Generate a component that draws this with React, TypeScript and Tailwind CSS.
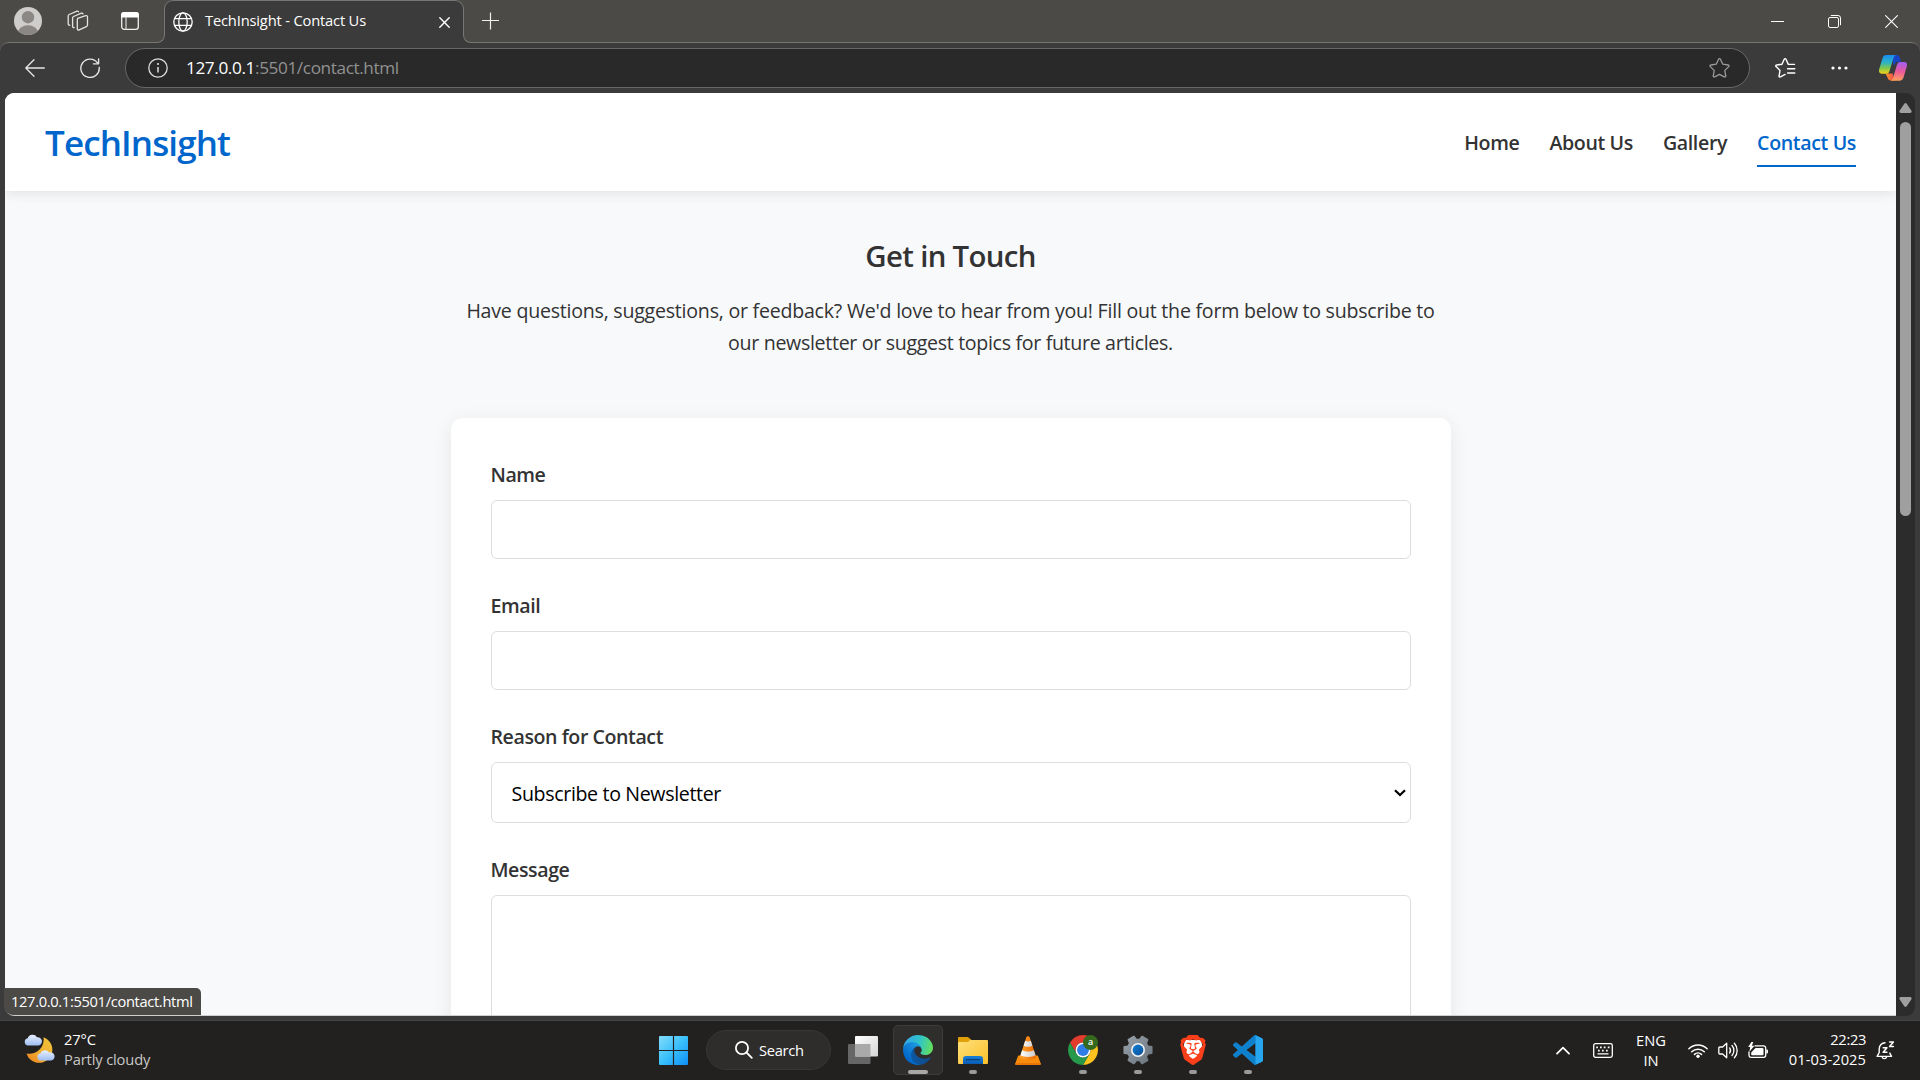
import React from "react";
import { SiBrave } from "react-icons/si";

/* ---------- Browser chrome icons ---------- */

const AvatarIcon = () => (
  <svg width="28" height="28" viewBox="0 0 28 28">
    <defs>
      <clipPath id="avatar-clip">
        <circle cx="14" cy="14" r="14" />
      </clipPath>
    </defs>
    <circle cx="14" cy="14" r="14" fill="#cfcdcb" />
    <g clipPath="url(#avatar-clip)" fill="#8b8784">
      <circle cx="14" cy="10.2" r="6.2" />
      <ellipse cx="14" cy="25.5" rx="10" ry="7.2" />
    </g>
  </svg>
);

const WorkspacesIcon = () => (
  <svg width="22" height="22" viewBox="0 0 22 22" fill="none" stroke="#e4e3e2" strokeWidth="1.3" strokeLinecap="round" strokeLinejoin="round">
    <path d="M10.6 8.3 18.7 5.7a1.3 1.3 0 0 1 1.8 1.2v8.2a1.6 1.6 0 0 1-1.1 1.5l-7.2 3.3a1.3 1.3 0 0 1-1.9-1.2V9.8a1.6 1.6 0 0 1 .9-1.6Z" />
    <path d="M7.2 17.6a1.3 1.3 0 0 1-1.6-1.2V8a1.6 1.6 0 0 1 1-1.5l7.8-3.3a1.3 1.3 0 0 1 1.6.8" />
    <path d="M2.8 15.2a1.3 1.3 0 0 1-1.6-1.2V6a1.6 1.6 0 0 1 1-1.5L10 1.1a1.3 1.3 0 0 1 1.5.7" />
  </svg>
);

const TabActionsIcon = () => (
  <svg width="18" height="18" viewBox="0 0 18 18" fill="none">
    <rect x=".7" y=".7" width="16.6" height="16.6" rx="2.6" stroke="#f0f0f0" strokeWidth="1.3" />
    <path d="M0 5.6V3a3 3 0 0 1 3-3h12a3 3 0 0 1 3 3v2.6z" fill="#fff" />
    <path d="M5 5v12.5" stroke="#d8d8d8" strokeWidth="1.2" />
  </svg>
);

const GlobeIcon = () => (
  <svg width="20" height="20" viewBox="0 0 20 20" fill="none" stroke="#fff" strokeWidth="1.3">
    <circle cx="10" cy="10" r="9.2" />
    <ellipse cx="10" cy="10" rx="4.2" ry="9.2" />
    <path d="M1.6 6.7h16.8M1.6 13.3h16.8" />
  </svg>
);

const TabCloseIcon = () => (
  <svg width="11" height="11" viewBox="0 0 11 11" stroke="#fff" strokeWidth="1.4" strokeLinecap="round">
    <path d="m.8.8 9.4 9.4M10.2.8.8 10.2" />
  </svg>
);

const PlusIcon = () => (
  <svg width="18" height="18" viewBox="0 0 18 18" stroke="#f0f0f0" strokeWidth="1.2">
    <path d="M8.500 .5v17M0 8.500h17" />
  </svg>
);

const MinimiseIcon = () => (
  <svg width="13" height="13" viewBox="0 0 13 13">
    <path d="M0 6.5h13" stroke="#fff" strokeWidth="1" />
  </svg>
);

const RestoreIcon = () => (
  <svg width="13" height="13" viewBox="0 0 13 13" fill="none" stroke="#fff" strokeWidth="1">
    <rect x=".5" y="2.5" width="10" height="10" rx="1.6" />
    <path d="M2.8.5h7.2a2.5 2.5 0 0 1 2.5 2.5v7.2" />
  </svg>
);

const WindowCloseIcon = () => (
  <svg width="13" height="13" viewBox="0 0 13 13" stroke="#fff" strokeWidth="1.1">
    <path d="m.3.3 12.4 12.4M12.7.3.3 12.7" />
  </svg>
);

const BackIcon = () => (
  <svg width="20" height="18" viewBox="0 0 20 18" fill="none" stroke="#e6e6e6" strokeWidth="1.3" strokeLinecap="round" strokeLinejoin="round">
    <path d="M19.3 9H.9M9 .8.8 9 9 17.2" />
  </svg>
);

const RefreshIcon = () => (
  <svg width="20" height="20" viewBox="0 0 20 20" fill="none" stroke="#e6e6e6" strokeWidth="1.35" strokeLinecap="round" strokeLinejoin="round">
    <path d="M19.2 9.3A9.2 9.2 0 1 1 17.6 5" />
    <path d="M18.6.8v5h-5.2" />
  </svg>
);

const InfoIcon = () => (
  <svg width="20" height="20" viewBox="0 0 20 20" fill="none" stroke="#dcdcdc">
    <circle cx="10" cy="10" r="9.2" strokeWidth="1.3" />
    <path d="M10 9v5.6" strokeWidth="1.5" />
    <circle cx="10" cy="6" r="1.05" fill="#dcdcdc" stroke="none" />
  </svg>
);

const StarIcon = () => (
  <svg width="21" height="20" viewBox="0 0 21 20" fill="none" stroke="#9a9a9a" strokeWidth="1.3" strokeLinejoin="round">
    <path d="M9.6 1.2a1 1 0 0 1 1.8 0l2.4 5 5.4.8a.9.9 0 0 1 .5 1.6l-3.9 3.8.9 5.4a.9.9 0 0 1-1.4 1l-4.8-2.5-4.8 2.5a.9.9 0 0 1-1.4-1l.9-5.4L1.3 8.6A.9.9 0 0 1 1.800 7l5.400-.8Z" />
  </svg>
);

const FavoritesIcon = () => (
  <svg width="21" height="20" viewBox="0 0 21 20" fill="none" stroke="#fff" strokeWidth="1.4" strokeLinejoin="round" strokeLinecap="round">
    <path d="M19.500 6.400H13.300L11 1.300a1 1 0 0 0-1.800 0L7 6.200l-5.400.8a.9.9 0 0 0-.5 1.600l3.900 3.800-.9 5.400a.9.9 0 0 0 1.400 1l4.600-2.400" />
    <path d="M12.600 10.700h7.200M12.600 15h7.200" />
  </svg>
);

const MoreIcon = () => (
  <svg width="17" height="4" viewBox="0 0 17 4" fill="#fff">
    <circle cx="2" cy="2" r="1.6" />
    <circle cx="8.500" cy="2" r="1.6" />
    <circle cx="15" cy="2" r="1.6" />
  </svg>
);

const CopilotIcon = () => (
  <svg width="28" height="26" viewBox="0 0 28 26">
    <defs>
      <linearGradient id="cp-left" x1="0" y1="0" x2="0" y2="1">
        <stop offset="0" stopColor="#1a8cf0" />
        <stop offset=".4" stopColor="#2bb3c6" />
        <stop offset=".7" stopColor="#7fc94a" />
        <stop offset="1" stopColor="#f6d31b" />
      </linearGradient>
      <linearGradient id="cp-right" x1=".4" y1="0" x2=".3" y2="1">
        <stop offset="0" stopColor="#a45df0" />
        <stop offset=".5" stopColor="#ee5a97" />
        <stop offset="1" stopColor="#fda45c" />
      </linearGradient>
      <linearGradient id="cp-bottom" x1="0" y1="0" x2="1" y2="0">
        <stop offset="0" stopColor="#f99b2c" />
        <stop offset="1" stopColor="#f0464a" />
      </linearGradient>
    </defs>
    <path d="M14 0h3.500c2.200 0 3 1.500 3.600 3.400l1 3.400h-3.200c-1.800 0-2.700 1-3.200 2.700L14 10z" fill="#1646c6" />
    <path d="M6.500 18.500h7.300l1.700 7H12c-2 0-3-1.300-3.600-3.300z" fill="url(#cp-bottom)" />
    <path d="M7.600 0h9.600c-1.500.3-2.300 1.500-2.800 3.200l-4 13c-.5 1.700-1.500 2.500-3.200 2.500H3c-2.600 0-3.500-2-2.800-4.400L3.500 3.200C4.100 1.200 5.400 0 7.600 0z" fill="url(#cp-left)" />
    <path d="M20.400 25.800h-9c1.500-.3 2.200-1.500 2.700-3.200l3.900-12.800c.5-1.700 1.500-2.800 3.200-2.800h4c2.600 0 3.300 2 2.600 4.400l-3.300 11.200c-.6 2-1.900 3.200-4.100 3.200z" fill="url(#cp-right)" />
  </svg>
);

/* ---------- Taskbar icons ---------- */

const WeatherIcon = () => (
  <svg width="31" height="29" viewBox="0 0 31 29">
    <defs>
      <linearGradient id="moon" x1="1" y1="0" x2="0" y2="1">
        <stop offset="0" stopColor="#f5c63a" />
        <stop offset=".6" stopColor="#f0ab30" />
        <stop offset="1" stopColor="#ee7e1c" />
      </linearGradient>
      <linearGradient id="cloud" x1="0" y1="0" x2="0" y2="1">
        <stop offset="0" stopColor="#e8f0fd" />
        <stop offset="1" stopColor="#9fbdf2" />
      </linearGradient>
    </defs>
    <path d="M19.500 3.200a13.200 13.200 0 1 1-17 16.300c9.500 1.800 18.500-6 17-16.300z" fill="url(#moon)" />
    <path d="M4 11.500a3.700 3.700 0 0 1-.3-7.300A5.200 5.200 0 0 1 13 3.200a4.200 4.200 0 0 1 1.500 8.300z" fill="url(#cloud)" />
    <path d="M16.500 26.500a3.500 3.500 0 0 1-.2-6.900 5 5 0 0 1 8.900-1.200 4.100 4.100 0 0 1 2.300 8.100z" fill="url(#cloud)" />
  </svg>
);

const WindowsIcon = () => (
  <svg width="29" height="29" viewBox="0 0 29 29">
    <defs>
      <linearGradient id="win" x1="0" y1="0" x2="29" y2="29" gradientUnits="userSpaceOnUse">
        <stop offset="0" stopColor="#83dcfb" />
        <stop offset=".5" stopColor="#3bc0fb" />
        <stop offset="1" stopColor="#0b8ef5" />
      </linearGradient>
    </defs>
    <path d="M1 0h12.900v13.900H0V1a1 1 0 0 1 1-1zM15.100 0H28a1 1 0 0 1 1 1v12.900H15.100zM0 15.100h13.900V29H1a1 1 0 0 1-1-1zM15.100 15.100H29V28a1 1 0 0 1-1 1H15.100z" fill="url(#win)" />
  </svg>
);

const SearchIcon = () => (
  <svg width="18" height="18" viewBox="0 0 18 18" fill="none" stroke="#fff" strokeWidth="1.8" strokeLinecap="round">
    <circle cx="7" cy="7" r="6.100" />
    <path d="m11.500 11.500 5.300 5.300" />
  </svg>
);

const TaskViewIcon = () => (
  <svg width="30" height="28" viewBox="0 0 30 28">
    <defs>
      <linearGradient id="tv" x1="0" y1="0" x2="1" y2="1">
        <stop offset="0" stopColor="#fff" />
        <stop offset="1" stopColor="#d4d4d4" />
      </linearGradient>
    </defs>
    <rect x="0" y="8" width="22.500" height="20" rx="1" fill="#666" />
    <rect x="7" y="0" width="23" height="20.500" rx="1" fill="url(#tv)" />
    <path d="M7 8h15.500v12.500H8a1 1 0 0 1-1-1z" fill="#a9a9a9" />
  </svg>
);

const EdgeIcon = () => (
  <svg width="30" height="30" viewBox="0 0 256 256">
    <defs>
      <linearGradient id="edge-a" x1="58" y1="177" x2="237" y2="177" gradientUnits="userSpaceOnUse">
        <stop offset="0" stopColor="#0c59a4" />
        <stop offset="1" stopColor="#114a8b" />
      </linearGradient>
      <linearGradient id="edge-b" x1="150" y1="100" x2="46" y2="212" gradientUnits="userSpaceOnUse">
        <stop offset="0" stopColor="#1b9de2" />
        <stop offset=".4" stopColor="#1383d9" />
        <stop offset="1" stopColor="#0067c9" />
      </linearGradient>
      <linearGradient id="edge-c" x1="20" y1="60" x2="250" y2="120" gradientUnits="userSpaceOnUse">
        <stop offset="0" stopColor="#35a9e8" />
        <stop offset=".5" stopColor="#2fc4c8" />
        <stop offset="1" stopColor="#66e05a" />
      </linearGradient>
    </defs>
    <path fill="url(#edge-a)" d="M231 190.500c-3.400 1.800-6.900 3.400-10.500 4.700a101.500 101.500 0 0 1-35.900 6.400c-47.300 0-88.500-32.500-88.500-74.300A31.500 31.500 0 0 1 112.400 100c-42.800 1.800-53.800 46.400-53.800 72.500 0 74 68.100 81.400 82.800 81.400 7.900 0 19.800-2.300 27-4.600l1.300-.4a128.300 128.300 0 0 0 66.600-52.800 4 4 0 0 0-5.300-5.600z" />
    <path fill="url(#edge-b)" d="M105.700 241.400a79.200 79.200 0 0 1-22.700-21.300 80.700 80.700 0 0 1 29.500-120c3.100-1.500 8.500-4.100 15.600-4a32.400 32.400 0 0 1 25.700 13 31.900 31.900 0 0 1 6.300 18.700c0-.2 24.500-79.600-80-79.600-43.900 0-80 41.600-80 78.200a130.200 130.200 0 0 0 12.100 56 128 128 0 0 0 156.400 67 75.500 75.500 0 0 1-62.800-8z" />
    <path fill="url(#edge-c)" d="M152.300 148.900c-.9 1-3.400 2.500-3.400 5.600 0 2.600 1.700 5.200 4.800 7.300 14.300 10 41.400 8.600 41.500 8.600a59.600 59.600 0 0 0 30.300-8.300 61.400 61.400 0 0 0 30.400-52.900c.3-22.400-8-37.300-11.300-43.900C223.500 23.900 177.700 0 128 0A128 128 0 0 0 0 126.200c.5-36.500 36.800-66 80-66 3.500 0 23.500.3 42 10.100 16.300 8.600 24.900 19 30.800 29.300 6.200 10.700 7.300 24.100 7.300 29.500s-2.700 13.300-7.800 19.900z" />
  </svg>
);

const FolderIcon = () => (
  <svg width="30" height="27" viewBox="0 0 30 27">
    <defs>
      <linearGradient id="folder" x1="0" y1="0" x2="1" y2="1">
        <stop offset="0" stopColor="#ffe07a" />
        <stop offset="1" stopColor="#fbc02a" />
      </linearGradient>
      <linearGradient id="folder-blue" x1="0" y1="0" x2="0" y2="1">
        <stop offset="0" stopColor="#1a80d8" />
        <stop offset="1" stopColor="#0a5cb0" />
      </linearGradient>
    </defs>
    <path d="M1 0h8.200c.7 0 1.200.2 1.700.7L13.500 3 9 7H0V1a1 1 0 0 1 1-1z" fill="#e0a009" />
    <path d="M0 6.200c0-.7.400-1.100 1-1.100h7.500c.8 0 1.300-.2 1.900-.7l1.200-.9c.5-.4 1-.5 1.700-.5H29a1 1 0 0 1 1 1v22a1 1 0 0 1-1 1H1a1 1 0 0 1-1-1z" fill="url(#folder)" />
    <path d="M5 27v-5a3 3 0 0 1 3-3h14a3 3 0 0 1 3 3v5z" fill="url(#folder-blue)" />
    <path d="M8.500 22.700h13" stroke="#08427f" strokeWidth="1.200" strokeLinecap="round" />
  </svg>
);

const VlcIcon = () => (
  <svg width="26" height="29" viewBox="0 0 26 29">
    <defs>
      <linearGradient id="vlc" x1="0" y1="0" x2="1" y2="0">
        <stop offset="0" stopColor="#ffa42e" />
        <stop offset="1" stopColor="#ef6a00" />
      </linearGradient>
      <linearGradient id="vlc-white" x1="0" y1="0" x2="1" y2="0">
        <stop offset="0" stopColor="#fff" />
        <stop offset="1" stopColor="#c9c9c9" />
      </linearGradient>
    </defs>
    <path d="M4.200 19.500h17.600c.8 0 1.200.3 1.400 1l2.600 7.200c.2.700-.2 1.100-.9 1.100H1.100c-.7 0-1.100-.4-.9-1.100l2.600-7.200c.2-.7.600-1 1.400-1z" fill="#f98b0e" />
    <path d="M.2 27h25.600v1a1 1 0 0 1-1 1H1.200a1 1 0 0 1-1-1z" fill="#e87500" />
    <path d="M11.500.8c.3-.9 2.700-.9 3 0L21 20.600c.3 2.200-3.700 3.200-8 3.200s-8.300-1-8-3.200z" fill="url(#vlc)" />
    <path d="M10.200 4.800c1.500.8 4.100.8 5.600 0l1.600 4.900c-2.300 1.300-6.500 1.300-8.800 0zM7.100 14.300c3 1.700 8.800 1.700 11.800 0l1.600 5c-3.500 2.300-11.500 2.300-15 0z" fill="url(#vlc-white)" />
  </svg>
);

const ChromeIcon = () => (
  <svg width="30" height="30" viewBox="0 0 48 48">
    <path d="M24 12h20.780A24 24 0 0 0 3.220 12l10.390 18.010A12 12 0 0 1 24 12z" fill="#e33b2e" />
    <path d="M34.390 30.010 24 48a24 24 0 0 0 20.780-36H24a12 12 0 0 1 10.390 18.010z" fill="#fcc31e" />
    <path d="M13.610 30.010 3.220 12A24 24 0 0 0 24 48l10.390-17.990a12 12 0 0 1-20.780 0z" fill="#27994a" />
    <circle cx="24" cy="24" r="12" fill="#fff" />
    <circle cx="24" cy="24" r="9.500" fill="#2f7de9" />
  </svg>
);

const polar = (r: number, deg: number) => {
  const a = (deg * Math.PI) / 180;
  return `${(15 + r * Math.cos(a)).toFixed(2)} ${(15 + r * Math.sin(a)).toFixed(2)}`;
};
const gearPath =
  "M" +
  [0, 60, 120, 180, 240, 300]
    .flatMap((d) => [polar(10.6, d - 20), polar(14, d - 13), polar(14, d + 13), polar(10.6, d + 20)])
    .join("L") +
  "Z";

const SettingsIcon = () => (
  <svg width="30" height="30" viewBox="0 0 30 30">
    <defs>
      <linearGradient id="gear" x1="0" y1="0" x2="1" y2="1">
        <stop offset="0" stopColor="#98a1a9" />
        <stop offset="1" stopColor="#6a747d" />
      </linearGradient>
      <linearGradient id="gear-blue" x1="0" y1="0" x2="1" y2="1">
        <stop offset="0" stopColor="#0f7fd4" />
        <stop offset="1" stopColor="#0a4f96" />
      </linearGradient>
    </defs>
    <path d={gearPath} fill="url(#gear)" stroke="url(#gear)" strokeWidth="1.800" strokeLinejoin="round" />
    <circle cx="15" cy="15" r="7" fill="#f2f2f2" />
    <circle cx="15" cy="15" r="5.400" fill="url(#gear-blue)" />
  </svg>
);

const BraveIcon = () => (
  <div className="relative flex size-[30px] items-center justify-center">
    <svg className="absolute" width="30" height="30" viewBox="0 0 30 30">
      <path d="M7 5h16l2 9-4 9-6 4-6-4-4-9z" fill="#fff" />
    </svg>
    <SiBrave className="relative" size={30} color="#fb3f1a" />
  </div>
);

const VsCodeIcon = () => (
  <svg width="30" height="30" viewBox="0 0 100 100">
    <path
      fillRule="evenodd"
      fill="#0f80cc"
      d="M70.900 99.300a6.200 6.200 0 0 0 5-.2l20.600-9.900A6.250 6.250 0 0 0 100 83.600V16.400a6.250 6.250 0 0 0-3.500-5.600L75.900.9a6.200 6.200 0 0 0-7.100 1.200L29.400 38 12.200 25a4.200 4.200 0 0 0-5.300.2L1.400 30.300a4.200 4.200 0 0 0 0 6.200L16.200 50 1.400 63.500a4.200 4.200 0 0 0 0 6.200l5.500 5a4.200 4.200 0 0 0 5.300.2l17.200-13 39.400 35.900c.6.600 1.300 1.100 2.100 1.500zM75 27.300 45.100 50 75 72.700z"
    />
    <path fill="#27a5ee" d="M75 1v98c.3 0 .6-.1.900-.3l20.600-9.500A6.250 6.250 0 0 0 100 83.600V16.400a6.250 6.250 0 0 0-3.500-5.600L75.900 1z" />
  </svg>
);

const ChevronUpIcon = () => (
  <svg width="14" height="9" viewBox="0 0 14 9" fill="none" stroke="#fff" strokeWidth="1.700" strokeLinecap="round" strokeLinejoin="round">
    <path d="m1 7.700 6-6 6 6" />
  </svg>
);

const KeyboardIcon = () => (
  <svg width="20" height="15" viewBox="0 0 20 15" fill="none">
    <rect x=".7" y=".7" width="18.600" height="13.600" rx="1.800" stroke="#fff" strokeWidth="1.300" />
    <g fill="#fff">
      <path d="M3.200 3.600h1.700v1.600H3.200zM7 3.600h1.700v1.600H7zM10.800 3.600h1.700v1.600h-1.700zM14.800 3.600h1.700v1.600h-1.700zM5 6.800h1.700v1.600H5zM9 6.800h1.700v1.600H9zM13 6.800h1.700v1.600H13zM4.500 10.200h11v1.400h-11z" />
    </g>
  </svg>
);

const WifiIcon = () => (
  <svg width="20" height="15" viewBox="0 0 20 15" fill="none" stroke="#fff" strokeWidth="1.500" strokeLinecap="round">
    <path d="M.9 5.800a12.900 12.900 0 0 1 18.200 0M3.700 8.700a9 9 0 0 1 12.600 0M6.500 11.400a5 5 0 0 1 7 0" />
    <circle cx="10" cy="13.200" r="1.700" fill="#fff" stroke="none" />
  </svg>
);

const SpeakerIcon = () => (
  <svg width="20" height="17" viewBox="0 0 20 17" fill="none" stroke="#fff" strokeWidth="1.300" strokeLinecap="round" strokeLinejoin="round">
    <path d="M8.700 1.200v14.600L4.600 12H1.800a1 1 0 0 1-1-1V6a1 1 0 0 1 1-1h2.800z" />
    <path d="M11.600 5.900a4.300 4.300 0 0 1 0 5.200M14 3.500a7.500 7.500 0 0 1 0 10M16.400 1.200a11 11 0 0 1 0 14.600" />
  </svg>
);

const BatteryIcon = () => (
  <svg width="20" height="17" viewBox="0 0 20 17">
    <path d="M7 3.900h8.700a2 2 0 0 1 2 2v7.400a2 2 0 0 1-2 2H3a2 2 0 0 1-2-2V10" fill="none" stroke="#fff" strokeWidth="1.300" strokeLinecap="round" />
    <path d="M7.500 6h7a1 1 0 0 1 1 1v5.200a1 1 0 0 1-1 1H4.200a1 1 0 0 1-1-1V10.500z" fill="#fff" />
    <path d="M18.300 7.600h.7a1 1 0 0 1 1 1v2a1 1 0 0 1-1 1h-.7z" fill="#fff" />
    <path d="M3.400 0 .2 5h2L1.400 9.800 6.400 3.700H3.900L5.300 0z" fill="#fff" />
  </svg>
);

const BellIcon = () => (
  <svg width="19" height="19" viewBox="0 0 19 19" fill="none" stroke="#fff" strokeLinecap="round" strokeLinejoin="round">
    <path d="M9 1.700a6.200 6.200 0 0 0-5.800 6v3.800L1.100 15.400h14.400l-1.700-3.300" strokeWidth="1.400" />
    <path d="M6.100 15.800a2.300 2.300 0 0 0 4.500 0" strokeWidth="1.400" />
    <path d="M7.200 6.700h3.700l-3.700 4.600h3.700M13.600 1h3.800l-3.800 4.600h3.800" strokeWidth="1.500" />
  </svg>
);

/* ---------- Browser window ---------- */

function TitleBar() {
  return (
    <div className="flex h-[42px] shrink-0 bg-[#4c4a47]">
      <div className="flex w-[164px] items-center pl-[14px] pb-px">
        <AvatarIcon />
        <div className="ml-[25px]">
          <WorkspacesIcon />
        </div>
        <div className="ml-[32px]">
          <TabActionsIcon />
        </div>
      </div>
      <div className="relative z-10 flex h-[44px] w-[300px] items-center rounded-t-[9px] border border-b-0 border-[#777674] bg-[#3b3b3b] pb-px pl-[8px]">
        <GlobeIcon />
        <span className="ml-[12px] pb-[3px] text-[14.7px] tracking-[-0.17px] whitespace-nowrap text-white">TechInsight - Contact Us</span>
        <div className="mr-[13px] ml-auto">
          <TabCloseIcon />
        </div>
        <div className="absolute bottom-0 -left-[8px] h-[10px] w-[8px] bg-[#3b3b3b]">
          <div className="h-[9px] w-[8px] rounded-br-[8px] border-r border-b border-[#777674] bg-[#4c4a47]" />
        </div>
        <div className="absolute -right-[8px] bottom-0 h-[10px] w-[8px] bg-[#3b3b3b]">
          <div className="h-[9px] w-[8px] rounded-bl-[8px] border-b border-l border-[#777674] bg-[#4c4a47]" />
        </div>
      </div>
      <div className="flex flex-1 items-center pl-[18px]">
        <PlusIcon />
        <div className="ml-auto flex items-center gap-[44px] pr-[22px]">
          <MinimiseIcon />
          <RestoreIcon />
          <WindowCloseIcon />
        </div>
      </div>
    </div>
  );
}

function Toolbar() {
  return (
    <div className="h-[51px] shrink-0 bg-[#4c4a47]">
      <div className="flex h-full items-center rounded-t-[9px] border-t border-[#777674] bg-[#3b3b3b] pl-[25px]">
        <BackIcon />
        <div className="ml-[35px]">
          <RefreshIcon />
        </div>
        <div className="ml-[25px] flex h-[40px] w-[1625px] items-center rounded-full border border-[#686868] bg-[#292929] pr-[19px] pl-[22px]">
          <InfoIcon />
          <span className="ml-[18px] pb-px text-[17.2px] tracking-[-0.39px] text-[#919191]">
            <span className="text-white">127.0.0.1</span>:5501/contact.html
          </span>
          <div className="ml-auto">
            <StarIcon />
          </div>
        </div>
        <div className="ml-[25px]">
          <FavoritesIcon />
        </div>
        <div className="ml-[35px]">
          <MoreIcon />
        </div>
        <div className="ml-[31px]">
          <CopilotIcon />
        </div>
      </div>
    </div>
  );
}

function Scrollbar() {
  return (
    <div className="flex w-[19px] flex-col items-center rounded-r-[9px] bg-[#2c2c2c] pt-[10px] pr-px pb-[9px]">
      <svg width="13" height="10" viewBox="0 0 13 10" fill="#9f9f9f">
        <path d="M5.300.8a1.500 1.500 0 0 1 2.400 0l4.600 6.800A1.500 1.500 0 0 1 11 10H2A1.500 1.500 0 0 1 .7 7.600z" />
      </svg>
      <div className="mt-[9px] h-[394px] w-[11px] rounded-full bg-[#9f9f9f]" />
      <svg className="mt-auto" width="13" height="10" viewBox="0 0 13 10" fill="#9f9f9f">
        <path d="M5.300 9.200a1.500 1.500 0 0 0 2.400 0l4.600-6.800A1.500 1.500 0 0 0 11 0H2A1.500 1.500 0 0 0 .7 2.400z" />
      </svg>
    </div>
  );
}

/* ---------- Web page ---------- */

function SiteHeader() {
  return (
    <header className="relative z-10 flex h-[98px] shrink-0 items-center justify-between bg-white px-[40px] shadow-[0_2px_12px_rgba(0,0,0,0.1)]">
      <h1 className="pt-[2px] text-[35px] font-[550] tracking-[-0.88px] text-[#0066cc]">TechInsight</h1>
      <nav className="flex gap-[30px] text-[19.6px] font-[550] tracking-[-0.37px] text-[#333]">
        <a className="h-[50px] pt-[3px] leading-[46px]">Home</a>
        <a className="h-[50px] pt-[3px] leading-[46px]">About Us</a>
        <a className="h-[50px] pt-[3px] leading-[46px]">Gallery</a>
        <a className="h-[50px] border-b-2 border-[#0066cc] pt-[3px] leading-[46px] text-[#0066cc]">Contact Us</a>
      </nav>
    </header>
  );
}

function Label({ children }: { children: React.ReactNode }) {
  return <label className="mb-[9px] block pt-px text-[19.6px] leading-[32px] font-[550] tracking-[-0.43px] text-[#333]">{children}</label>;
}

function ContactForm() {
  return (
    <form className="mx-auto mt-[59px] h-[760px] w-[1000px] rounded-[12px] bg-white px-[40px] pt-[40px] shadow-[0_4px_20px_rgba(0,0,0,0.08)]">
      <Label>Name</Label>
      <input className="mb-[30px] block h-[59px] w-full rounded-[6px] border border-[#ddd] bg-white px-[20px] outline-none" />
      <Label>Email</Label>
      <input className="mb-[30px] block h-[59px] w-full rounded-[6px] border border-[#ddd] bg-white px-[20px] outline-none" />
      <Label>Reason for Contact</Label>
      <div className="mb-[30px] flex h-[61px] w-full items-center justify-between rounded-[6px] border border-[#ddd] bg-white pr-[4px] pl-[20px]">
        <span className="pt-[2px] text-[19.6px] tracking-[-0.35px] text-black">Subscribe to Newsletter</span>
        <svg width="12" height="8" viewBox="0 0 12 8" fill="none" stroke="#000" strokeWidth="2.200">
          <path d="m1 1.200 5 4.800 5-4.800" />
        </svg>
      </div>
      <Label>Message</Label>
      <textarea className="block h-[200px] w-full resize-none rounded-[6px] border border-[#ddd] bg-white outline-none" />
    </form>
  );
}

function ContactPage() {
  return (
    <div className="flex h-full flex-1 flex-col bg-[#f8f9fb]">
      <SiteHeader />
      <main className="pt-[41px]">
        <h2 className="text-center text-[29.4px] leading-[48px] font-[550] tracking-[-0.68px] text-[#333]">Get in Touch</h2>
        <p className="mt-[15px] text-center text-[19.6px] leading-[32px] text-[#333]">
          <span className="tracking-[-0.24px]">
            Have questions, suggestions, or feedback? We'd love to hear from you! Fill out the form below to subscribe to
          </span>
          <br />
          <span className="tracking-[-0.32px]">our newsletter or suggest topics for future articles.</span>
        </p>
        <ContactForm />
      </main>
    </div>
  );
}

/* ---------- Taskbar ---------- */

function TaskButton({ children, active, running }: { children: React.ReactNode; active?: boolean; running?: boolean }) {
  return (
    <div className={active ? "relative flex size-[50px] items-center justify-center rounded-[5px] border border-[#3d3c3b] bg-[#2f2e2d]" : "relative flex size-[50px] items-center justify-center"}>
      {children}
      {active && <div className="absolute bottom-0 left-[14px] h-[4px] w-[20px] rounded-full bg-[#aaa8a6]" />}
      {running && <div className="absolute bottom-px left-[21px] h-[4px] w-[8px] rounded-full bg-[#9a9a9a]" />}
    </div>
  );
}

function Taskbar() {
  return (
    <div className="flex h-[60px] shrink-0 items-center border-t border-[#444] bg-[#22211f] pb-px text-[14.7px] text-white">
      <div className="flex w-[648px] items-center pb-[2px] pl-[24px]">
        <div className="pb-[2px]">
          <WeatherIcon />
        </div>
        <div className="ml-[9px] leading-[20px]">
          <div className="tracking-[-0.15px]">27°C</div>
          <div className="tracking-[-0.14px] text-[#c8c7c6]">Partly cloudy</div>
        </div>
      </div>
      <div className="flex items-center">
        <TaskButton>
          <WindowsIcon />
        </TaskButton>
        <div className="mr-[7px] ml-[8px] flex h-[40px] w-[125px] items-center rounded-full border border-[#383736] bg-[#2e2d2c] pl-[28px]">
          <SearchIcon />
          <span className="ml-[6px] tracking-[-0.28px]">Search</span>
        </div>
        <div className="flex gap-[5px]">
          <TaskButton>
            <TaskViewIcon />
          </TaskButton>
          <TaskButton active>
            <EdgeIcon />
          </TaskButton>
          <TaskButton running>
            <FolderIcon />
          </TaskButton>
          <TaskButton>
            <VlcIcon />
          </TaskButton>
          <TaskButton running>
            <ChromeIcon />
            <span className="absolute top-[9.500px] left-[25px] flex size-[15px] items-center justify-center rounded-full bg-[#35691d] pb-[2px] text-[9px] leading-none font-semibold">a</span>
          </TaskButton>
          <TaskButton running>
            <SettingsIcon />
          </TaskButton>
          <TaskButton running>
            <BraveIcon />
          </TaskButton>
          <TaskButton running>
            <VsCodeIcon />
          </TaskButton>
        </div>
      </div>
      <div className="flex flex-1 items-center justify-end pr-[25px]">
        <ChevronUpIcon />
        <div className="ml-[23px]">
          <KeyboardIcon />
        </div>
        <div className="ml-[22px] w-[32px] pb-px text-center leading-[20px]">
          <div>ENG</div>
          <div>IN</div>
        </div>
        <div className="ml-[21px] flex items-center gap-[10px]">
          <WifiIcon />
          <SpeakerIcon />
          <BatteryIcon />
        </div>
        <div className="ml-[19px] w-[79px] pb-[2px] text-right leading-[20px]">
          <div className="tracking-[-0.35px]">22:23</div>
          <div className="tracking-[0.05px]">01-03-2025</div>
        </div>
        <div className="ml-[10px]">
          <BellIcon />
        </div>
      </div>
    </div>
  );
}

export default function App() {
  return (
    <div className="flex h-[1080px] w-[1920px] flex-col overflow-hidden bg-[#3b3b3b] font-['Open_Sans',sans-serif]">
      <TitleBar />
      <Toolbar />
      <div className="relative flex h-[927px] shrink-0 pr-[5px] pb-[4px] pl-[5px]">
        <div className="flex flex-1 overflow-hidden rounded-tl-[9px] rounded-bl-[9px] border-b border-[#cfcfcf] bg-white">
          <ContactPage />
        </div>
        <Scrollbar />
        <div className="absolute bottom-[5px] left-[4px] z-20 flex h-[27px] w-[197px] items-center rounded-tr-[5px] rounded-bl-[9px] bg-[#4c4a47] pb-px pl-[7px] text-[14.7px] tracking-[-0.34px] text-white">
          127.0.0.1:5501/contact.html
        </div>
      </div>
      <Taskbar />
    </div>
  );
}
